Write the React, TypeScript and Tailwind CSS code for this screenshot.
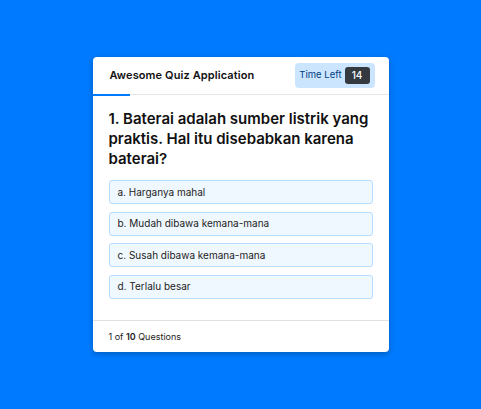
import React from 'react'

const options = [
  'a. Harganya mahal',
  'b. Mudah dibawa kemana-mana',
  'c. Susah dibawa kemana-mana',
  'd. Terlalu besar',
]

export default function App() {
  return (
    <div
      className="flex h-[409px] w-[481px] items-start justify-center bg-[#007bff] pt-[57px]"
      style={{ fontFamily: 'Inter, "Open Sans", sans-serif' }}
    >
      <div className="w-[296px] rounded-[4px] bg-white shadow-[0_2px_6px_rgba(0,0,0,0.25)]">
        {/* header */}
        <div className="relative flex h-[38px] items-center justify-between border-b border-[#e5e5e5] pl-[17px] pr-[14px]">
          <span className="text-[11px] font-semibold tracking-[0.1px] text-[#111]">Awesome Quiz Application</span>
          <div className="flex h-[25px] items-center gap-[3px] rounded-[4px] bg-[#cce5ff] pl-[4px] pr-[5px]">
            <span className="text-[9.5px] text-[#004085]">Time Left</span>
            <span className="flex h-[17px] w-[25px] items-center justify-center rounded-[3px] bg-[#343a40] text-[10px] font-medium text-white">
              14
            </span>
          </div>
          <div className="absolute bottom-[-2px] left-0 h-[2px] w-[37px] bg-[#007bff]" />
        </div>

        {/* question */}
        <div className="px-[16px] pt-[14px] pb-[21px]">
          <h2 className="text-[15px] font-semibold leading-[20px] text-[#111]">
            1. Baterai adalah sumber listrik yang praktis. Hal itu disebabkan karena baterai?
          </h2>
          <div className="mt-[11px] flex flex-col gap-[7.67px]">
            {options.map(o => (
              <div
                key={o}
                className="flex h-[24px] items-center rounded-[3px] border border-[#b6dcfe] bg-[#f0f8ff] px-[8px] text-[10px] text-[#222]"
              >
                {o}
              </div>
            ))}
          </div>
        </div>

        {/* footer */}
        <div className="flex h-[32px] items-center border-t border-[#e0e0e0] px-[16px] text-[9px] text-[#222]">
          <span>
            1 of <b className="font-semibold">10</b> Questions
          </span>
        </div>
      </div>
    </div>
  )
}
